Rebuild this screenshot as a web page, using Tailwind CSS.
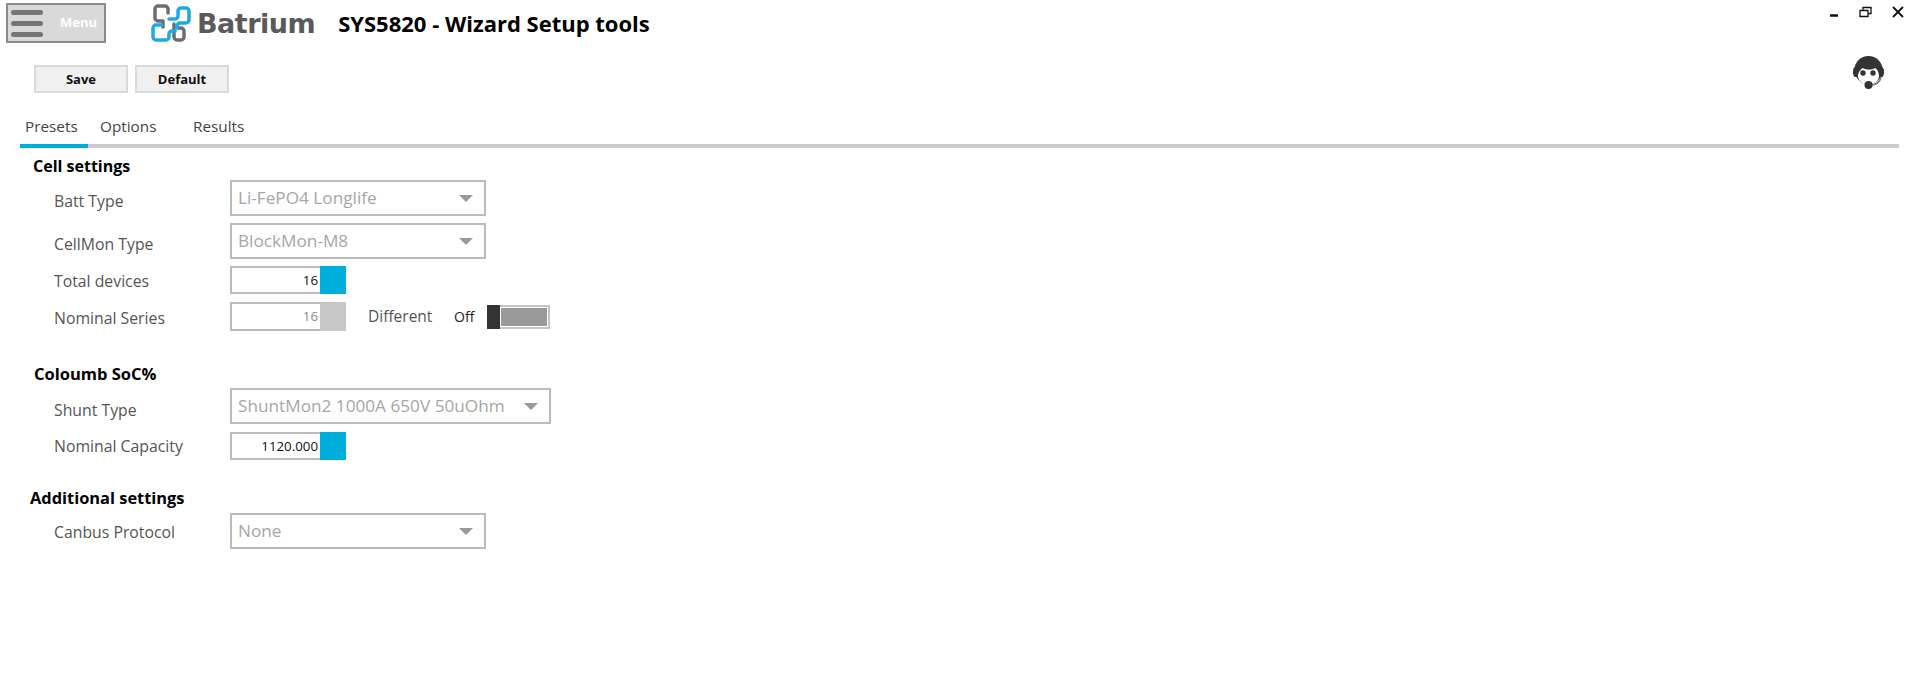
<!DOCTYPE html>
<html><head><meta charset="utf-8">
<script src="https://cdn.jsdelivr.net/npm/@tailwindcss/browser@4"></script>
</head>
<body class="bg-white font-['Open_Sans','Noto_Sans',sans-serif] text-[#555] h-[679px] w-[1920px] overflow-hidden relative">
<header class="h-[65px] flex items-start">
  <div class="ml-[6px] mt-[3px] w-[100px] h-[40px] border-2 border-[#8c8c8c] bg-[#d9d9d9] flex items-center pl-[3px]">
    <div class="flex flex-col gap-[6px] w-[32px]">
      <div class="h-[5px] rounded-full bg-[#757575]"></div>
      <div class="h-[5px] rounded-full bg-[#757575]"></div>
      <div class="h-[5px] rounded-full bg-[#757575]"></div>
    </div>
    <span class="ml-[17px] text-[13px] font-bold text-white">Menu</span>
  </div>
  <svg class="ml-[44px] mt-[4px]" width="42" height="42" viewBox="0 0 42 42" fill="none" stroke-linecap="round" stroke-linejoin="round">
    <path d="M18 9V5a3 3 0 0 0-3-3H8a3 3 0 0 0-3 3v9a3 3 0 0 0 3 3h5v6" stroke="#6d6e71" stroke-width="3.500"/>
    <path d="M24 20v13a3 3 0 0 0 3 3h4a3 3 0 0 0 3-3v-6a3 3 0 0 0-3-3h-3" stroke="#6d6e71" stroke-width="3.500"/>
    <path d="M19 15h6a3 3 0 0 0 3-3V7a3 3 0 0 1 3-3h5a3 3 0 0 1 3 3v9a3 3 0 0 1-3 3h-6a3 3 0 0 0-3 3v2" stroke="#1da9e1" stroke-width="3.500"/>
    <path d="M12 21H6a3 3 0 0 0-3 3v9a3 3 0 0 0 3 3h10a3 3 0 0 0 3-3v-3a3 3 0 0 1 3-3h3" stroke="#1da9e1" stroke-width="3.500"/>
  </svg>
  <span class="ml-[5px] mt-[7px] text-[27px] leading-[34px] font-bold font-['DejaVu_Sans',sans-serif] text-[#595a5c] tracking-[-0.5px]">Batrium</span>
  <h1 class="ml-[23px] mt-[9px] text-[22px] leading-[28px] font-bold text-black">SYS5820 - Wizard Setup tools</h1>
  <div class="ml-auto relative w-[100px] h-[65px]">
    <svg class="absolute left-[10px] top-[6px]" width="85" height="14" viewBox="0 0 85 14" fill="none" stroke="#111">
      <path d="M0 9.500H8" stroke-width="2.500"/>
      <path d="M30 4.500H38V10.500H30ZM33 4V1.500H41V7.500H38" stroke-width="1.300"/>
      <path d="M63 1L73 11M73 1L63 11" stroke-width="1.800"/>
    </svg>
  </div>
</header>
<svg class="absolute left-[1853px] top-[55px]" width="32" height="36" viewBox="0 0 32 36">
  <ellipse cx="15.500" cy="15" rx="14" ry="14" fill="#333"/>
  <ellipse cx="2.500" cy="17" rx="2.500" ry="5" fill="#333"/>
  <ellipse cx="28.500" cy="17" rx="2.500" ry="5" fill="#333"/>
  <path d="M5 21c0-4 3-7 5-8 3 2 9 2 12 0 2 1 4 4 4 8 0 5-5 8-10.500 8S5 26 5 21z" fill="#fff"/>
  <circle cx="10" cy="18" r="2.700" fill="#333"/><circle cx="20" cy="18" r="2.700" fill="#333"/>
  <path d="M28 22c-1 5-5 8-11 8" fill="none" stroke="#777" stroke-width="1.500"/>
  <circle cx="15.500" cy="30" r="4" fill="#333"/>
</svg>
<div class="ml-[34px] flex gap-[7px] h-[28px]">
  <button class="w-[94px] pt-[1px] border-2 border-[#d9d9d9] bg-[#f0f0f0] text-[13px] font-bold text-[#111]">Save</button>
  <button class="w-[94px] pt-[1px] border-2 border-[#d9d9d9] bg-[#f0f0f0] text-[13px] font-bold text-[#111]">Default</button>
</div>
<nav class="mx-[20px] mt-[22px] w-[1879px] h-[33px] border-b-4 border-[#cccccc] flex text-[15.300px] text-[#444] leading-[22px] relative">
  <span class="ml-[5px] w-[75px]">Presets</span>
  <span class="w-[93px]">Options</span>
  <span>Results</span>
  <div class="absolute left-0 bottom-[-4px] w-[68px] h-[4px] bg-[#00aedb]"></div>
</nav>
<main class="text-[15.800px]">
  <h2 class="ml-[33px] mt-[8px] h-[20px] leading-[20px] font-bold text-[16px] text-black">Cell settings</h2>
  <div class="mt-[4px] flex items-center h-[36px]">
    <label class="ml-[54px] w-[176px] mt-[7px]">Batt Type</label>
    <div class="w-[256px] h-[36px] border-2 border-[#bbb] flex items-center justify-between pl-[6px] pr-[11px] text-[17.200px] text-[#a6a6a6]"><span>Li-FePO4 Longlife</span><span class="w-0 h-0 border-x-[7px] border-x-transparent border-t-[7px] border-t-[#999]"></span></div>
  </div>
  <div class="mt-[7px] flex items-center h-[36px]">
    <label class="ml-[54px] w-[176px] mt-[8px]">CellMon Type</label>
    <div class="w-[256px] h-[36px] border-2 border-[#bbb] flex items-center justify-between pl-[6px] pr-[11px] text-[17.200px] text-[#a6a6a6]"><span>BlockMon-M8</span><span class="w-0 h-0 border-x-[7px] border-x-transparent border-t-[7px] border-t-[#999]"></span></div>
  </div>
  <div class="mt-[7px] flex items-center h-[28px]">
    <label class="ml-[54px] w-[176px] mt-[3px]">Total devices</label>
    <div class="w-[116px] h-[28px] flex border-2 border-r-0 border-[#bbb] text-[13.300px] text-[#111]"><span class="flex-1 text-right pr-[2px] leading-[24px]">16</span><span class="w-[26px] h-[28px] mt-[-2px] bg-[#00aedb]"></span></div>
  </div>
  <div class="mt-[8px] flex items-center h-[29px]">
    <label class="ml-[54px] w-[176px] mt-[5px]">Nominal Series</label>
    <div class="w-[116px] h-[29px] flex border-2 border-r-0 border-[#bbb] text-[13.300px] text-[#888]"><span class="flex-1 text-right pr-[2px] leading-[24px]">16</span><span class="w-[26px] h-[29px] mt-[-2px] bg-[#c8c8c8]"></span></div>
    <span class="ml-[22px] w-[86px] text-[15.500px]">Different</span>
    <span class="text-[14px] text-[#222] w-[33px]">Off</span>
    <div class="w-[63px] h-[24px] border-2 border-[#c4c4c4] flex relative"><span class="absolute left-[-2px] top-[-2px] w-[13px] h-[24px] bg-[#333]"></span><span class="ml-[12px] my-[1px] flex-1 mr-[1px] bg-[#999]"></span></div>
  </div>
  <h2 class="ml-[34px] mt-[33px] h-[20px] leading-[20px] font-bold text-[16.500px] text-black">Coloumb SoC%</h2>
  <div class="mt-[4px] flex items-center h-[36px]">
    <label class="ml-[54px] w-[176px] mt-[10px]">Shunt Type</label>
    <div class="w-[321px] h-[36px] border-2 border-[#bbb] flex items-center justify-between pl-[6px] pr-[11px] text-[17.200px] text-[#a6a6a6]"><span>ShuntMon2 1000A 650V 50uOhm</span><span class="w-0 h-0 border-x-[7px] border-x-transparent border-t-[7px] border-t-[#999]"></span></div>
  </div>
  <div class="mt-[8px] flex items-center h-[28px]">
    <label class="ml-[54px] w-[176px] mt-[2px]">Nominal Capacity</label>
    <div class="w-[116px] h-[28px] flex border-2 border-r-0 border-[#bbb] text-[13.300px] text-[#111]"><span class="flex-1 text-right pr-[2px] leading-[24px]">1120.000</span><span class="w-[26px] h-[28px] mt-[-2px] bg-[#00aedb]"></span></div>
  </div>
  <h2 class="ml-[30px] mt-[28px] h-[20px] leading-[20px] font-bold text-[16.400px] text-black">Additional settings</h2>
  <div class="mt-[5px] flex items-center h-[36px]">
    <label class="ml-[54px] w-[176px] mt-[4px]">Canbus Protocol</label>
    <div class="w-[256px] h-[36px] border-2 border-[#bbb] flex items-center justify-between pl-[6px] pr-[11px] text-[17.200px] text-[#a6a6a6]"><span>None</span><span class="w-0 h-0 border-x-[7px] border-x-transparent border-t-[7px] border-t-[#999]"></span></div>
  </div>
</main>
</body></html>
